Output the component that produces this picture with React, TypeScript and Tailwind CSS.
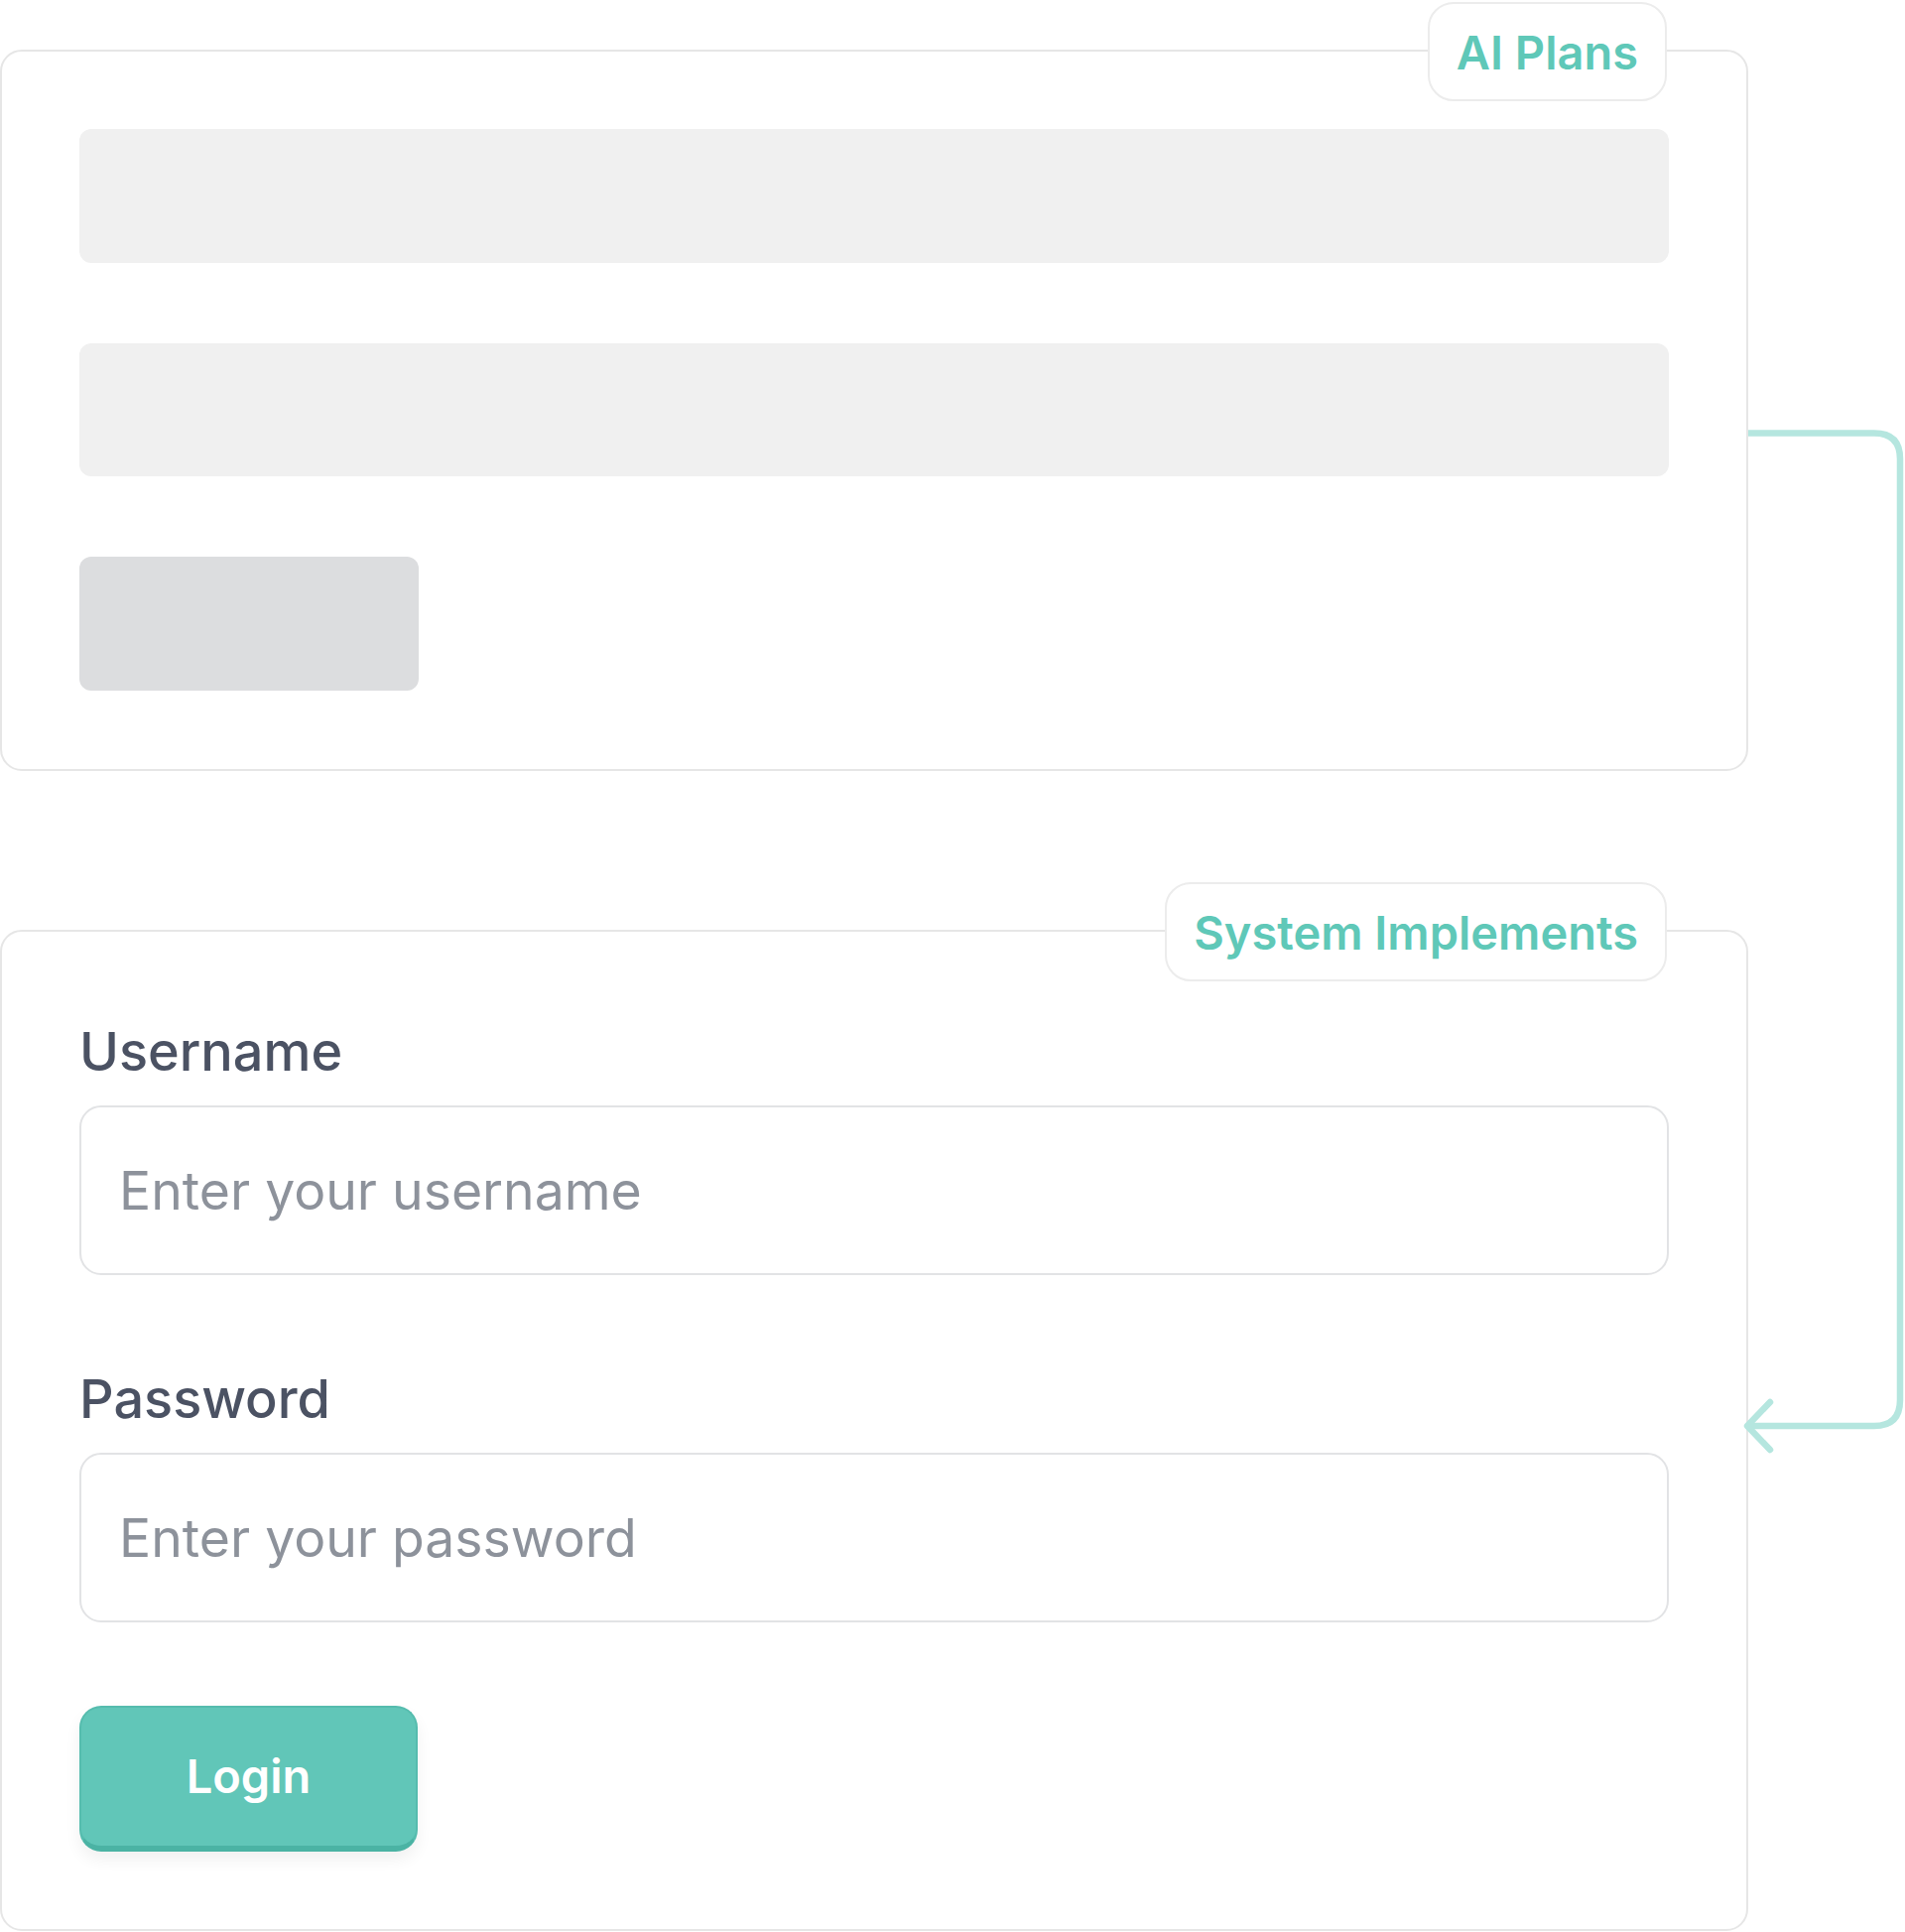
import React from 'react';

const Badge: React.FC<{ label: string }> = ({ label }) => (
    <div className="absolute right-[80px] top-0 -translate-y-1/2 h-[100px] flex items-center px-[27px] bg-white border-2 border-[#ececec] rounded-[26px]">
        <span className="text-[47px] leading-none font-semibold text-[#5fc8b8]">{label}</span>
    </div>
);

const Connector: React.FC = () => (
    <svg
        className="absolute left-0 top-0 pointer-events-none"
        width={1920}
        height={1947}
        viewBox="0 0 1920 1947"
        fill="none"
    >
        <path
            d="M1762 436.5 H1889 Q1915 436.5 1915 462.5 V1411 Q1915 1437 1889 1437 H1762"
            stroke="#b5e6df"
            strokeWidth={6.5}
            strokeLinejoin="round"
        />
        <path
            d="M1784 1413 L1761 1437 L1784 1461"
            stroke="#b5e6df"
            strokeWidth={6.5}
            strokeLinecap="round"
            strokeLinejoin="round"
        />
    </svg>
);

const Field: React.FC<{ label: string; placeholder: string; type?: string; first?: boolean }> = ({ label, placeholder, type = 'text', first }) => (
    <div className={first ? '' : 'mt-[84px]'}>
        <label className="block text-[54px] leading-[81px] font-medium text-[#4b5263]">{label}</label>
        <input
            type={type}
            placeholder={placeholder}
            className="mt-[14px] block w-full h-[171px] px-[38px] text-[53.5px] text-[#4b5263] bg-white border-2 border-[#e2e3e5] rounded-[22px] outline-none placeholder:text-[#8d929b]"
        />
    </div>
);

export default function App() {
    return (
        <div className="relative w-[1920px] h-[1947px] bg-white font-[Inter,sans-serif] overflow-hidden">
            <div className="flex flex-col w-[1762px] pt-[50px] gap-[160px]">
                {/* AI plans card (skeleton) */}
                <div className="relative border-2 border-[#e6e6e6] rounded-[22px] pt-[78px] pb-[79px] px-[78px] flex flex-col gap-[81px]">
                    <Badge label="AI Plans" />
                    <div className="h-[135px] rounded-[12px] bg-[#f0f0f0]" />
                    <div className="h-[134px] rounded-[12px] bg-[#f0f0f0]" />
                    <div className="h-[135px] w-[342px] rounded-[12px] bg-[#dcdddf]" />
                </div>

                {/* System implements card (login form) */}
                <div className="relative border-2 border-[#e6e6e6] rounded-[22px] pt-[80px] pb-[78px] px-[78px]">
                    <Badge label="System Implements" />
                    <Field label="Username" placeholder="Enter your username" first />
                    <Field label="Password" placeholder="Enter your password" type="password" />
                    <button className="mt-[84px] w-[341px] h-[147px] rounded-[22px] bg-[#61c6b8] border-2 border-[#55bcae] border-b-[6px] border-b-[#4bb3a4] shadow-[0_8px_16px_rgba(0,0,0,0.06)] text-white text-[47px] font-semibold">
                        Login
                    </button>
                </div>
            </div>
            <Connector />
        </div>
    );
}
